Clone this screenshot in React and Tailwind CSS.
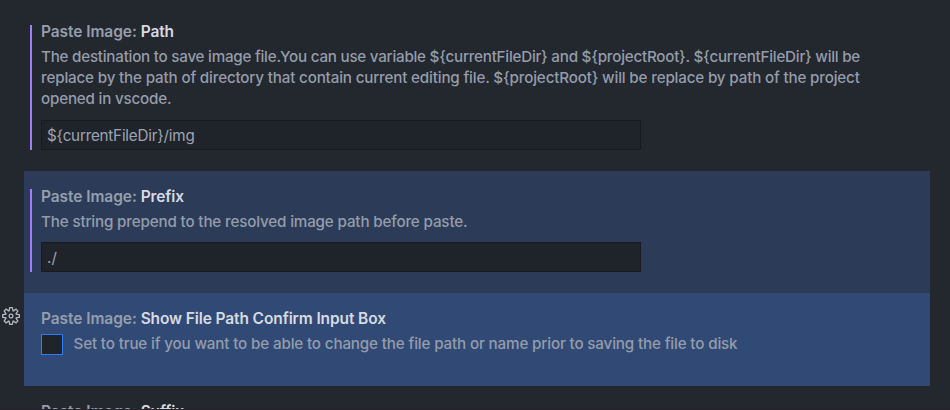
import { VscSettingsGear } from "react-icons/vsc";

function Title({ name }) {
  return (
    <h3 className="h-[21px] whitespace-nowrap text-[15.5px] font-semibold leading-[21px] text-[#949ead]">
      <span className="tracking-[-0.07px]">Paste Image: </span>
      <span className="tracking-[-0.11px] text-[#d7dae0]">{name}</span>
    </h3>
  );
}

function Line({ className = "", children }) {
  return (
    <p className={`whitespace-nowrap text-[15.2px] font-[450] leading-[21px] text-[#949cab] ${className}`}>
      {children}
    </p>
  );
}

function Field({ value, className }) {
  return (
    <div className={`flex h-[30px] w-[600px] items-center border border-[#181a1f] bg-[#1f232a] px-[5px] pt-[2px] text-[15.2px] text-[#9da5b4] ${className}`}>
      {value}
    </div>
  );
}

export default function App() {
  return (
    <main className="flex h-[410px] w-[950px] flex-col overflow-hidden bg-[#23272e] pt-[6px] font-['Inter',sans-serif]">
      <section className="ml-6 flex h-[165px] w-[906px] shrink-0 pl-[6px]">
        <div className="mt-[19px] h-[125px] w-[2px] bg-[#9f7efe]" />
        <div className="pl-[9px] pt-[15px]">
          <Title name="Path" />
          <div className="mt-1">
            <Line className="tracking-[-0.24px]">{"The destination to save image file.You can use variable ${currentFileDir} and ${projectRoot}. ${currentFileDir} will be"}</Line>
            <Line className="tracking-[-0.17px]">{"replace by the path of directory that contain current editing file. ${projectRoot} will be replace by path of the project"}</Line>
            <Line className="tracking-[-0.2px]">opened in vscode.</Line>
          </div>
          <Field value="${currentFileDir}/img" className="mt-[11px] tracking-[-0.2px]" />
        </div>
      </section>

      <section className="ml-6 flex h-[122px] w-[906px] shrink-0 bg-[#2c3c58] pl-[6px]">
        <div className="mt-[18px] h-[83px] w-[2px] bg-[#9f7efe]" />
        <div className="pl-[9px] pt-[15px]">
          <Title name="Prefix" />
          <Line className="mt-1 tracking-[-0.16px]">The string prepend to the resolved image path before paste.</Line>
          <Field value="./" className="mt-[10px]" />
        </div>
      </section>

      <section className="flex h-[93px] shrink-0">
        <div className="w-6 pl-[2px]">
          <VscSettingsGear className="mt-[14px] h-[18px] w-[18px] text-[#b0b7c2]" />
        </div>
        <div className="w-[906px] bg-[#314a75] pl-[17px] pt-[15px]">
          <Title name="Show File Path Confirm Input Box" />
          <div className="mt-1 flex">
            <div className="mt-px h-[21px] w-[22px] border border-[#2a7bff] bg-[#1f232a]" />
            <Line className="ml-[10.5px] tracking-[-0.15px]">Set to true if you want to be able to change the file path or name prior to saving the file to disk</Line>
          </div>
        </div>
      </section>

      <section className="h-[23px] shrink-0 overflow-hidden pl-[41px] pt-[15px]">
        <Title name="Suffix" />
      </section>
      <footer className="h-px shrink-0 bg-[#26212a]" />
    </main>
  );
}
